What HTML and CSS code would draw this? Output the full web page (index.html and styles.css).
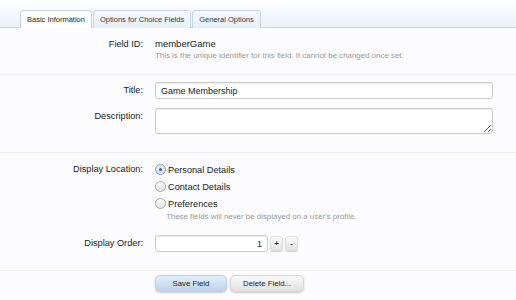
FILE: index.html
```html
<!DOCTYPE html>
<html lang="en">
<head>
    <meta charset="UTF-8">
    <meta name="viewport" content="width=device-width, initial-scale=1.0">
    <title>Edit Field</title>
    <link rel="stylesheet" href="styles.css">
</head>
<body>
    <div class="tabBar">
        <a class="tab active">Basic Information</a>
        <a class="tab">Options for Choice Fields</a>
        <a class="tab">General Options</a>
    </div>

    <form class="xenForm">
        <fieldset class="section first">
            <div class="ctrlUnit">
                <label class="lbl">Field ID:</label>
                <div class="ctrl">
                    <div class="fieldId">memberGame</div>
                    <p class="explain">This is the unique identifier for this field. It cannot be changed once set.</p>
                </div>
            </div>
        </fieldset>

        <fieldset class="section">
            <div class="ctrlUnit">
                <label class="lbl">Title:</label>
                <div class="ctrl"><input type="text" class="textCtrl" value="Game Membership"></div>
            </div>
            <div class="ctrlUnit">
                <label class="lbl">Description:</label>
                <div class="ctrl"><textarea class="textCtrl desc"></textarea></div>
            </div>
        </fieldset>

        <fieldset class="section display">
            <div class="ctrlUnit">
                <label class="lbl">Display Location:</label>
                <div class="ctrl">
                    <label class="radio"><span class="dot on"></span>Personal Details</label>
                    <label class="radio"><span class="dot"></span>Contact Details</label>
                    <label class="radio"><span class="dot"></span>Preferences</label>
                    <p class="explain indent">These fields will never be displayed on a user's profile.</p>
                </div>
            </div>
            <div class="ctrlUnit order">
                <label class="lbl">Display Order:</label>
                <div class="ctrl spin">
                    <input type="text" class="textCtrl num" value="1">
                    <button type="button" class="spinBt">+</button>
                    <button type="button" class="spinBt">-</button>
                </div>
            </div>
        </fieldset>

        <div class="submitUnit">
            <button type="button" class="button primary">Save Field</button>
            <button type="button" class="button">Delete Field...</button>
        </div>
    </form>
</body>
</html>
```

FILE: styles.css
```css
*{
    padding: 0px;
    margin: 0px;
    box-sizing: border-box;
}
body{
    font-family: "Liberation Sans", Arial, sans-serif;
    color: #222;
    background: #fcfcfe;
    width: 516px;
    height: 300px;
    overflow: hidden;
}
.tabBar{
    display: flex;
    padding: 10px 0 0 20px;
    height: 28px;
    background: linear-gradient(to bottom, #ffffff, #eaf1f8);
    border-bottom: 1px solid #c5d6e6;
}
.tab{
    display: block;
    height: 18px;
    padding: 0 6px;
    margin-right: 1px;
    font-size: 7.5px;
    line-height: 17px;
    color: #2b3c4d;
    background: linear-gradient(to bottom, #f6f9fc, #e6eef6);
    border: 1px solid #c5d6e6;
    border-bottom: none;
    border-radius: 4px 4px 0 0;
}
.tab.active{
    background: #fff;
    color: #222;
}

fieldset{
    border: none;
    border-top: 1px solid #e6eff5;
    padding: 7px 23px 18px 0;
}
fieldset.first{
    border-top: none;
    padding: 8px 23px 13px 0;
}
fieldset.display{
    padding-top: 8px;
}
.ctrlUnit{
    display: grid;
    grid-template-columns: 143px 1fr;
    column-gap: 12px;
    margin-bottom: 9px;
}
.ctrlUnit:last-child{
    margin-bottom: 0;
}
.lbl{
    text-align: right;
    font-size: 9.2px;
    color: #222;
    line-height: 16px;
}
.fieldId{
    font-size: 9.5px;
    line-height: 15px;
}
.explain{
    font-size: 7.9px;
    color: #999;
    line-height: 10px;
}
.explain.indent{
    padding-left: 11px;
}
.textCtrl{
    display: block;
    width: 100%;
    height: 17px;
    font-family: "Liberation Sans", Arial, sans-serif;
    font-size: 9px;
    color: #222;
    padding: 0 5px;
    border: 1px solid #cbcbcb;
    border-radius: 3px;
    background: #fff;
    box-shadow: inset 0 1px 1px #eee;
    outline: none;
}
.desc{
    height: 26px;
    resize: vertical;
    padding: 2px 5px;
}

.radio{
    display: flex;
    align-items: center;
    font-size: 9.2px;
    line-height: 16px;
    height: 17px;
}
.dot{
    width: 11px;
    height: 11px;
    border-radius: 50%;
    border: 1px solid #a9a9a9;
    background: linear-gradient(to bottom, #fdfdfd, #e4e4e4);
    margin-right: 2px;
    position: relative;
}
.dot.on{
    border-color: #7d9ec2;
    background: linear-gradient(to bottom, #e8f1fb, #c9dcf2);
}
.dot.on::after{
    content: "";
    position: absolute;
    left: 3px;
    top: 3px;
    width: 3px;
    height: 3px;
    border-radius: 50%;
    background: #3b5e86;
}
.order{
    margin-top: 13px;
}
.spin{
    display: flex;
    align-items: center;
    gap: 2px;
}
.num{
    width: 113px;
    text-align: right;
}
.spinBt{
    width: 13px;
    height: 15px;
    font-family: "Liberation Sans", Arial, sans-serif;
    font-size: 8px;
    font-weight: bold;
    color: #333;
    border: 1px solid #ddd;
    border-radius: 3px;
    background: linear-gradient(to bottom, #fbfbfb, #e3e3e3);
    box-shadow: 0 1px 1px #ccc;
}

.submitUnit{
    border-top: 1px solid #e6eff5;
    padding: 4px 0 0 155px;
    display: flex;
    gap: 3px;
}
.button{
    height: 17px;
    padding: 0 12px;
    font-family: "Liberation Sans", Arial, sans-serif;
    font-size: 7.8px;
    color: #222;
    border: 1px solid #d6d6d6;
    border-radius: 5px;
    background: linear-gradient(to bottom, #fafafa, #e0e0e0);
    box-shadow: 0 1px 2px #c8c8c8;
}
.button.primary{
    width: 72px;
    padding: 0;
    border-color: #bcd0e4;
    background: linear-gradient(to bottom, #e4eef8, #bdd3ea);
}
```
